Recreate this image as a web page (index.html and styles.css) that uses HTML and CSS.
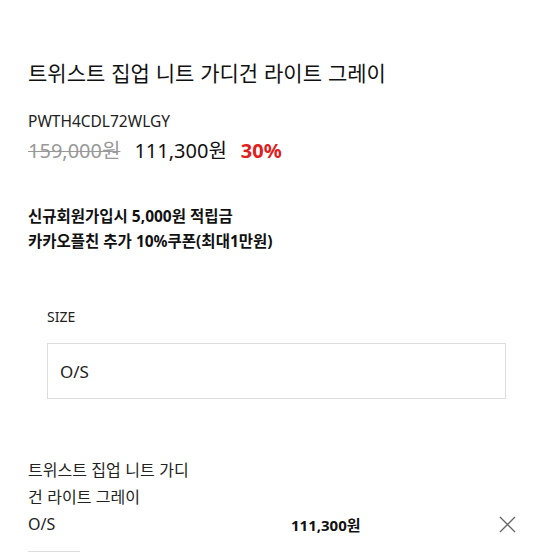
FILE: index.html
```html
<!DOCTYPE html>
<html lang="ko">
<head>
<meta charset="utf-8">
<link rel="stylesheet" href="styles.css">
</head>
<body>
<div class="page">
  <h1 class="title">트위스트 집업 니트 가디건 라이트 그레이</h1>
  <div class="sku">PWTH4CDL72WLGY</div>
  <div class="price-row">
    <span class="price-old">159,000원</span>
    <span class="price-now">111,300원</span>
    <span class="price-rate">30%</span>
  </div>
  <div class="benefits">
    <p>신규회원가입시 5,000원 적립금</p>
    <p>카카오플친 추가 10%쿠폰(최대1만원)</p>
  </div>
  <div class="option">
    <div class="option-label">SIZE</div>
    <div class="option-box">O/S</div>
  </div>
  <div class="cart-item">
    <div class="cart-name">트위스트 집업 니트 가디<br>건 라이트 그레이</div>
    <div class="cart-row">
      <span class="cart-opt">O/S</span>
      <span class="cart-price">111,300원</span>
      <span class="cart-remove" aria-label="삭제">
        <svg width="17" height="17" viewBox="0 0 17 17"><path d="M1 1L16 16M16 1L1 16" stroke="#666" stroke-width="1.3" fill="none"/></svg>
      </span>
    </div>
    <div class="qty"></div>
  </div>
</div>
</body>
</html>
```

FILE: styles.css
```css
* { box-sizing: border-box; }
html, body { margin: 0; padding: 0; background: #fff; }
body {
  font-family: "Noto Sans", "Noto Sans CJK KR", sans-serif;
  color: #111;
  overflow: hidden;
  height: 553px;
}
.page { padding: 0 27px 0 28px; }
.title {
  margin: 56px 0 0;
  font-size: 21px;
  font-weight: 400;
  line-height: 32px;
  font-family: "Noto Sans CJK KR", sans-serif;
}
.sku {
  margin-top: 23px;
  font-size: 15.5px;
  line-height: 20px;
  color: #222;
}
.price-row {
  margin-top: 6px;
  display: flex;
  align-items: baseline;
  gap: 14px;
  font-size: 20px;
  line-height: 28px;
}
.price-old { color: #999; text-decoration: line-through; text-decoration-thickness: 1px; }
.price-now { color: #111; }
.price-rate { color: #e02020; font-weight: 700; }
.benefits {
  margin-top: 39px;
  font-size: 15.5px;
  font-weight: 700;
  line-height: 25px;
}
.benefits p { margin: 0; }
.option {
  margin-top: 55px;
  padding-left: 19px;
}
.option-label {
  font-size: 14px;
  line-height: 16px;
  color: #222;
}
.option-box {
  margin-top: 18px;
  width: 459px;
  height: 56px;
  border: 1.5px solid #ddd;
  padding: 0 12px;
  display: flex;
  align-items: center;
  font-size: 17px;
  color: #222;
}
.cart-item { margin-top: 57px; }
.cart-name {
  font-size: 16px;
  line-height: 27px;
  color: #222;
  font-family: "Noto Sans CJK KR", sans-serif;
}
.cart-row {
  display: flex;
  align-items: center;
  height: 28px;
  font-size: 16px;
}
.cart-opt { width: 263px; color: #222; }
.cart-price { font-weight: 700; font-size: 15px; width: 208px; }
.cart-remove { display: flex; }
.qty {
  margin-top: 13px;
  width: 52px;
  height: 20px;
  border-top: 1px solid #ddd;
}
```
